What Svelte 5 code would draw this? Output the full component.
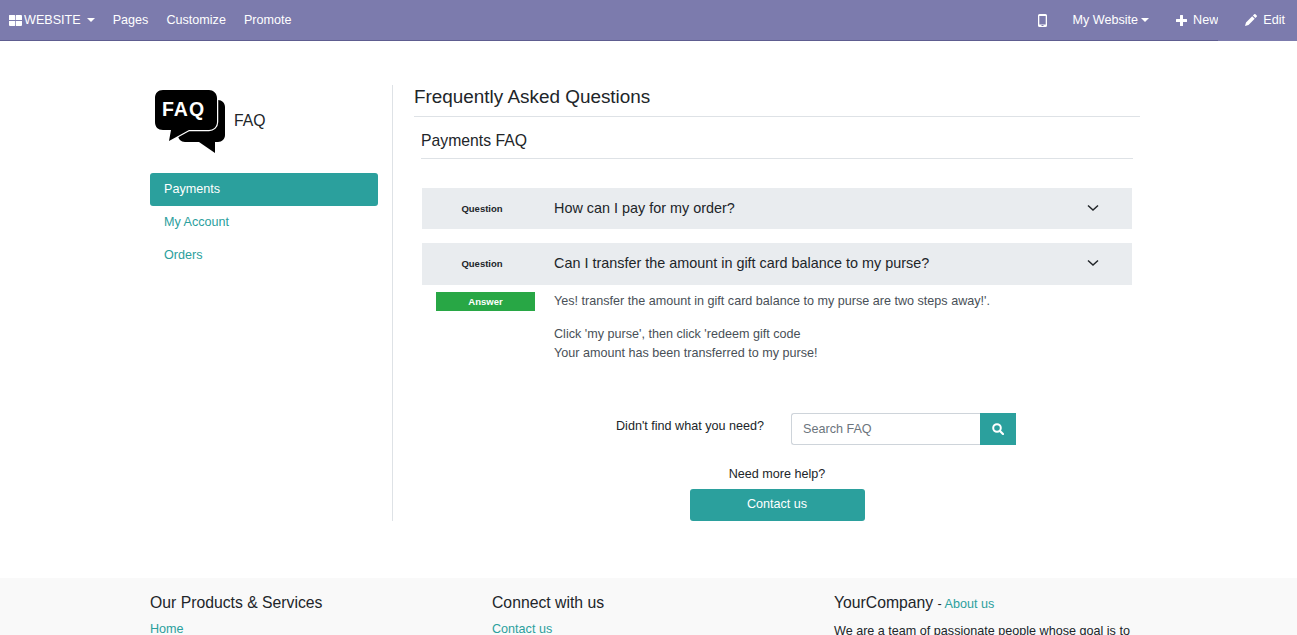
<script>
	const menu = ['Pages', 'Customize', 'Promote'];
	const sections = [
		{ name: 'Payments', active: true },
		{ name: 'My Account' },
		{ name: 'Orders' }
	];
</script>

<div class="page">
	<nav class="topbar">
		<div class="nav-left">
			<a href="#top" class="nav-item apps">
				<svg width="13" height="11" viewBox="0 0 13 11"><path d="M1 0h4.500a.8.8 0 0 1 .8.8V5H0V.8A.8.8 0 0 1 1 0zM7 0h5a1 1 0 0 1 1 1v4H7zM0 6h6.300v4.200a.8.8 0 0 1-.8.8H1a1 1 0 0 1-1-1zM7 6h6v4a1 1 0 0 1-1 1H7z" fill="#fff" /></svg>
				WEBSITE
				<span class="caret wide"></span>
			</a>
			{#each menu as item}
				<a href="#top" class="nav-item">{item}</a>
			{/each}
		</div>
		<div class="nav-right">
			<a href="#top" class="nav-item phone" aria-label="Mobile preview">
				<svg width="9" height="13" viewBox="0 0 9 13"><path fill-rule="evenodd" d="M1.500 0h6A1.500 1.500 0 0 1 9 1.500v10A1.500 1.500 0 0 1 7.500 13h-6A1.500 1.500 0 0 1 0 11.500v-10A1.500 1.500 0 0 1 1.500 0zM1.300 2v8.500h6.400V2zM3.500 11v1h2v-1z" fill="#fff" /></svg>
			</a>
			<a href="#top" class="nav-item site">My Website <span class="caret"></span></a>
			<a href="#top" class="nav-item new">
				<svg width="11" height="11" viewBox="0 0 11 11"><path d="M4 .5a.5.5 0 0 1 .5-.5h2a.5.5 0 0 1 .5.5V4h3.500a.5.5 0 0 1 .5.5v2a.5.5 0 0 1-.5.5H7v3.500a.5.5 0 0 1-.5.5h-2a.5.5 0 0 1-.5-.5V7H.5A.5.5 0 0 1 0 6.500v-2A.5.5 0 0 1 .5 4H4z" fill="#fff" /></svg>
				New
			</a>
			<a href="#top" class="nav-item edit">
				<svg width="12" height="12" viewBox="0 0 12 12"><path d="M9.200.3a1 1 0 0 1 1.300 0l1.200 1.200a1 1 0 0 1 0 1.300l-1.300 1.300-2.500-2.500zM7.200 2.300l2.500 2.500-6.200 6.200-3.500 1 1-3.500z" fill="#fff" /></svg>
				Edit
			</a>
		</div>
	</nav>

	<main class="container">
		<aside class="sidebar">
			<div class="brand">
				<svg class="logo" width="72" height="64" viewBox="0 0 72 64">
					<path d="M30 10h33c4 0 7 3 7 7v28c0 4-3 7-7 7h-3l0 11-16-11H30c-4 0-7-3-7-7V17c0-4 3-7 7-7z" />
					<path d="M8 0h46c4 0 8 3 8 8v24c0 5-4 8-8 8H34L14 51l2-11H8c-5 0-8-3-8-8V8c0-5 3-8 8-8z" stroke="#fff" stroke-width="2.500" paint-order="stroke" />
					<text x="7" y="25.500" class="logo-text">FAQ</text>
				</svg>
				<span class="brand-name">FAQ</span>
			</div>
			<ul class="sections">
				{#each sections as s}
					<li><a href="#top" class:active={s.active}>{s.name}</a></li>
				{/each}
			</ul>
		</aside>

		<section class="content">
			<h1>Frequently Asked Questions</h1>
			<div class="inner">
				<h2>Payments FAQ</h2>

				<div class="question first">
					<span class="q-label">Question</span>
					<span class="q-text">How can I pay for my order?</span>
					<svg class="chevron" width="12" height="8" viewBox="0 0 12 8"><path d="M1 1.500 6 6l5-4.500" fill="none" stroke="#212529" stroke-width="1.500" /></svg>
				</div>

				<div class="question second">
					<span class="q-label">Question</span>
					<span class="q-text">Can I transfer the amount in gift card balance to my purse?</span>
					<svg class="chevron" width="12" height="8" viewBox="0 0 12 8"><path d="M1 1.500 6 6l5-4.500" fill="none" stroke="#212529" stroke-width="1.500" /></svg>
				</div>

				<div class="answer">
					<div class="a-col"><span class="a-label">Answer</span></div>
					<div class="a-text">
						<p>Yes! transfer the amount in gift card balance to my purse are two steps away!'.</p>
						<p>Click 'my purse', then click 'redeem gift code<br />Your amount has been transferred to my purse!</p>
					</div>
				</div>

				<div class="search-row">
					<span class="search-label">Didn't find what you need?</span>
					<div class="search">
						<input type="text" placeholder="Search FAQ" />
						<button aria-label="Search">
							<svg width="12" height="12" viewBox="0 0 12 12"><circle cx="5" cy="5" r="3.800" fill="none" stroke="#fff" stroke-width="2" /><path d="m8 8 3 3" stroke="#fff" stroke-width="2.200" stroke-linecap="round" /></svg>
						</button>
					</div>
				</div>

				<div class="help">
					<p>Need more help?</p>
					<a href="#top" class="contact">Contact us</a>
				</div>
			</div>
		</section>
	</main>

	<footer>
		<div class="footer-inner">
			<div class="col">
				<h5>Our Products &amp; Services</h5>
				<a href="#top">Home</a>
			</div>
			<div class="col">
				<h5>Connect with us</h5>
				<a href="#top">Contact us</a>
			</div>
			<div class="col">
				<h5>YourCompany <small>- <a href="#top">About us</a></small></h5>
				<p>We are a team of passionate people whose goal is to</p>
			</div>
		</div>
	</footer>
</div>

<style>
	:global(body) {
		font-family: 'Liberation Sans', Arial, sans-serif;
		font-size: 12.600px;
		color: #212529;
		background: #fff;
	}

	a {
		text-decoration: none;
		color: #2ba09d;
	}

	.page {
		height: 100vh;
		overflow: hidden;
	}

	.topbar {
		display: flex;
		justify-content: space-between;
		height: 40px;
		background: #7c7bad;
		border-bottom: 1px solid #5e5d90;
	}

	.nav-left,
	.nav-right {
		display: flex;
		align-items: center;
	}

	.nav-item {
		color: #fff;
		display: flex;
		align-items: center;
		gap: 4px;
		line-height: 40px;
		white-space: nowrap;
	}

	.apps {
		margin-left: 9px;
		margin-right: 18px;
		gap: 2px;
	}

	.nav-left .nav-item:not(.apps) {
		margin-right: 18px;
	}

	.caret {
		display: inline-block;
		width: 0;
		height: 0;
		border-left: 4px solid transparent;
		border-right: 4px solid transparent;
		border-top: 4px solid #fff;
	}

	.caret.wide {
		margin-left: 4px;
	}

	.site {
		gap: 3px;
		margin-left: 26px;
	}

	.new {
		margin-left: 27px;
		gap: 6px;
	}

	.edit {
		align-self: stretch;
		margin-bottom: -1px;
		padding: 0 12px 1px 27px;
		gap: 6px;
		background: #7c7bad;
	}

	.container {
		display: flex;
		width: 997px;
		margin: 44px auto 0;
		height: 436px;
	}

	.sidebar {
		flex: none;
		width: 228px;
		padding-right: 14px;
		border-right: 1px solid #dee2e6;
	}

	.brand {
		display: flex;
		align-items: flex-start;
		height: 73px;
		padding: 5px 0 0 5px;
		margin-bottom: 10px;
		gap: 7px;
	}

	.logo {
		fill: #000;
	}

	.logo-text {
		fill: #fff;
		font-family: 'Liberation Sans', Arial, sans-serif;
		font-weight: 700;
		font-size: 19.500px;
		letter-spacing: 1px;
	}

	.brand-name {
		font-size: 15.750px;
		line-height: 20px;
		margin-top: 21px;
	}

	.sections {
		list-style: none;
		margin: 0;
		padding: 0;
	}

	.sections li {
		height: 33.500px;
	}

	.sections a {
		display: block;
		padding: 0 14px;
		height: 33px;
		line-height: 31.500px;
		border-radius: 3px;
	}

	.sections a.active {
		background: #2ba09d;
		color: #fff;
		line-height: 32px;
	}

	.content {
		margin-left: 21px;
		width: 726px;
	}

	h1 {
		font-size: 18.900px;
		font-weight: 400;
		margin: 0;
		height: 31px;
		line-height: 23px;
		border-bottom: 1px solid #dee2e6;
	}

	.inner {
		padding: 0 7px;
	}

	h2 {
		font-size: 15.750px;
		font-weight: 400;
		margin: 0 0 29px;
		height: 41px;
		line-height: 47px;
		border-bottom: 1px solid #dee2e6;
	}

	.question {
		display: flex;
		align-items: center;
		background: #e9ecef;
		margin: 0 1px;
		padding-right: 33px;
	}

	.question.first {
		height: 41px;
		margin-bottom: 14px;
	}

	.question.second {
		height: 42px;
	}

	.q-label {
		width: 132px;
		flex: none;
		text-align: center;
		padding-right: 12px;
		box-sizing: border-box;
		font-size: 9.500px;
		font-weight: 700;
	}

	.second .q-label {
		padding-bottom: 1px;
	}

	.q-text {
		flex: 1;
		font-size: 14.400px;
		padding-bottom: 2px;
	}

	.chevron {
		margin-bottom: 2px;
	}

	.answer {
		display: flex;
		margin: 0 1px;
		padding-top: 7px;
		height: 113px;
		box-sizing: border-box;
	}

	.a-col {
		width: 132px;
		flex: none;
		padding-left: 14px;
		box-sizing: border-box;
	}

	.a-label {
		display: block;
		width: 99px;
		height: 19px;
		line-height: 19px;
		background: #28a745;
		color: #fff;
		font-size: 9.500px;
		font-weight: 700;
		text-align: center;
	}

	.a-text {
		color: #495057;
		line-height: 19px;
	}

	.a-text p {
		margin: 0 0 14px;
	}

	.search-row {
		display: flex;
		align-items: flex-start;
		margin-left: 195px;
		gap: 27px;
		height: 54px;
		margin-top: 15px;
	}

	.search-label {
		line-height: 27px;
	}

	.search {
		display: flex;
		height: 32px;
	}

	.search input {
		width: 189px;
		box-sizing: border-box;
		border: 1px solid #ced4da;
		border-right: none;
		border-radius: 3px 0 0 3px;
		padding: 0 11px;
		font: 12.600px 'Liberation Sans', Arial, sans-serif;
		outline: none;
	}

	.search input::placeholder {
		color: #6c757d;
	}

	.search button {
		width: 36px;
		background: #2ba09d;
		border: none;
		padding: 0;
		display: flex;
		align-items: center;
		justify-content: center;
	}

	.help {
		display: flex;
		flex-direction: column;
		align-items: center;
	}

	.help p {
		margin: 0 0 7px;
		line-height: 15px;
	}

	.contact {
		display: block;
		width: 175px;
		height: 32px;
		line-height: 30px;
		text-align: center;
		background: #2ba09d;
		color: #fff;
		border-radius: 3px;
	}

	footer {
		margin-top: 57px;
		background: #f9f9f9;
		height: 200px;
	}

	.footer-inner {
		display: grid;
		grid-template-columns: 342px 342px 313px;
		width: 997px;
		margin: 0 auto;
		padding-top: 15px;
	}

	h5 {
		font-size: 15.750px;
		font-weight: 400;
		margin: 0 0 10px;
		line-height: 19px;
	}

	h5 small {
		font-size: 12.600px;
	}

	.col p {
		margin: 0;
	}
</style>
